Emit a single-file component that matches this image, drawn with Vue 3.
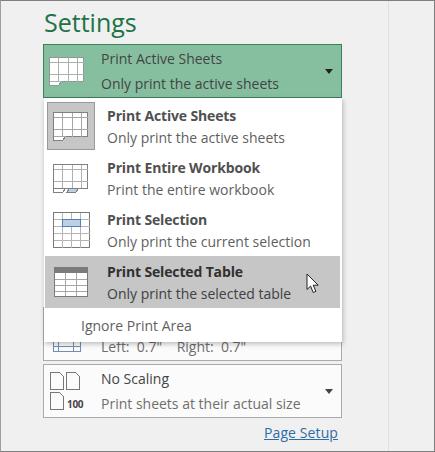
<script setup>
const options = [
  { id: 'active', title: 'Print Active Sheets', desc: 'Only print the active sheets' },
  { id: 'workbook', title: 'Print Entire Workbook', desc: 'Print the entire workbook' },
  { id: 'selection', title: 'Print Selection', desc: 'Only print the current selection' },
  { id: 'table', title: 'Print Selected Table', desc: 'Only print the selected table' }
]
</script>

<template>
  <div class="window">
    <div class="panel">
      <h1 class="heading">Settings</h1>

      <div class="rows">
        <div class="row row-open">
          <div class="row-icon">
            <svg width="36" height="29" viewBox="0 0 36 29" class="crisp">
              <path d="M.5.5h34v24h-22l-3 4h-9z" fill="#fff" stroke="#8e9a92" />
              <path d="M.5 5.500h34M.5 17.500h34M9.500 1v24M19.500 1v24M28.500 1v24M.5 24.500h12" fill="none" stroke="#a9b2ac" />
            </svg>
          </div>
          <div class="row-text">
            <div class="row-title">Print Active Sheets</div>
            <div class="row-desc">Only print the active sheets</div>
          </div>
          <span class="caret"></span>
        </div>

        <div class="row row-margins">
          <div class="row-icon">
            <svg width="28" height="44" viewBox="0 0 28 44" class="crisp">
              <path d="M.5 1h27v42h-27zM.5 38.500h27M5.500 1v42M20.500 1v42" fill="none" stroke="#6f8db5" />
            </svg>
          </div>
          <div class="row-text">
            <div class="row-title">&nbsp;</div>
            <div class="row-desc muted">Left:&nbsp; 0.7"&nbsp;&nbsp;&nbsp; Right:&nbsp; 0.7"</div>
          </div>
        </div>

        <div class="row row-scaling">
          <div class="row-icon scale-icon">
            <svg width="32" height="38" viewBox="0 0 32 38" class="crisp">
              <path d="M.5.500h9l4 4v13h-13zM16.500.500h9l4 4v13h-13zM.5 20.500h9l4 4v13h-13z" fill="none" stroke="#777" />
            </svg>
            <span class="scale-num">100</span>
          </div>
          <div class="row-text">
            <div class="row-title">No Scaling</div>
            <div class="row-desc muted">Print sheets at their actual size</div>
          </div>
          <span class="caret caret-light"></span>
        </div>
      </div>

      <div class="link-line">
        <a class="setup-link">Page Setup</a>
      </div>

      <!-- dropdown lies over the rows -->
      <div class="menu">
        <div
          v-for="opt in options"
          :key="opt.id"
          class="menu-item"
          :class="{ hovered: opt.id === 'table' }"
        >
          <div class="thumb" :class="{ 'thumb-active': opt.id === 'active' }">
            <svg v-if="opt.id === 'active'" width="36" height="29" viewBox="0 0 36 29" class="crisp">
              <path d="M.5.500h34v24h-22l-3 4h-9z" fill="#fff" stroke="#808080" />
              <path d="M.5 5.500h34M.5 17.500h34M9.500 1v24M19.500 1v24M28.500 1v24M.5 24.500h12" fill="none" stroke="#a6a6a6" />
            </svg>
            <svg v-else-if="opt.id === 'workbook'" width="36" height="29" viewBox="0 0 36 29" class="crisp">
              <path d="M.5.500h34v24h-22l-3 4h-9z" fill="#fff" stroke="#808080" />
              <path d="M.5 5.500h34M.5 17.500h34M9.500 1v24M19.500 1v24M28.500 1v24" fill="none" stroke="#b0b0b0" />
              <path d="M.5 24.500h34" stroke="#808080" />
              <path d="M13.500 28.500l3-4h9l-3 4z" fill="#bdd0e6" stroke="#808080" />
            </svg>
            <svg v-else-if="opt.id === 'selection'" width="37" height="36" viewBox="0 0 37 36" class="crisp">
              <rect x=".5" y=".5" width="36" height="35" fill="#fff" stroke="#7a7a7a" />
              <path d="M.5 7.500h36M.5 14.500h36M.5 21.500h36M.5 28.500h36M9.500 1v35M18.500 1v35M27.500 1v35" fill="none" stroke="#b5b5b5" />
              <rect x="9.500" y="7.500" width="18" height="7" fill="#bdd0e6" stroke="#4f81bd" />
            </svg>
            <svg v-else width="34" height="30" viewBox="0 0 34 30" class="crisp">
              <rect x=".5" y=".5" width="33" height="29" fill="#fff" stroke="#7a7a7a" />
              <rect x="0" y="0" width="34" height="6" fill="#7a7a7a" />
              <path d="M1 12.500h32M1 18.500h32M1 24.500h32M11.500 6v23M22.500 6v23" fill="none" stroke="#a6a6a6" />
            </svg>
          </div>
          <div class="item-text">
            <div class="item-title">{{ opt.title }}</div>
            <div class="item-desc">{{ opt.desc }}</div>
          </div>
        </div>
        <div class="menu-footer">Ignore Print Area</div>
      </div>

      <!-- mouse pointer -->
      <svg class="pointer" width="14" height="21" viewBox="0 0 14 21">
        <path d="M1 1v15.500l3.600-3.400 2.600 6.400 2.700-1.100-2.700-6.200h5z" fill="#fff" stroke="#222" stroke-linejoin="round" />
      </svg>
    </div>
  </div>
</template>

<style>
html,
body {
  margin: 0;
  background: #f0f0f0;
}
</style>

<style scoped>
.window {
  width: 435px;
  height: 452px;
  box-sizing: border-box;
  border: 1px solid #7f7f7f;
  border-left-color: #a0a0a0;
  background: #f0f0f0;
  font-family: "Open Sans", "Noto Sans", sans-serif;
  overflow: hidden;
}

.panel {
  position: relative;
  width: 388px;
  height: 100%;
  box-sizing: border-box;
  padding: 0 46px 0 42px;
  border-right: 1px solid #e0e0e0;
}

.heading {
  margin: 0;
  height: 43px;
  padding-left: 1px;
  font-size: 25px;
  line-height: 42px;
  font-weight: 400;
  color: #217346;
}

.rows {
  display: flex;
  flex-direction: column;
  gap: 3px;
}

.row {
  display: flex;
  align-items: center;
  box-sizing: border-box;
  height: 54px;
  border: 1px solid #ababab;
  background: #fbfbfb;
}

.row-open {
  background: #86bf9f;
  border-color: #3e8158;
  margin-bottom: 206px;
}

.row-icon {
  flex: none;
  width: 57px;
  padding-left: 5px;
  box-sizing: border-box;
  display: flex;
}

.row-margins .row-icon {
  padding-left: 9px;
  margin-top: -8px;
}

.row-scaling .row-icon {
  padding-left: 6px;
}

.row-text {
  flex: 1;
  line-height: 25px;
  font-size: 14px;
  color: #444;
  white-space: nowrap;
}

.row-desc.muted {
  color: #6e6e6e;
}

.row-scaling .row-text {
  margin-top: -1px;
}

.caret {
  flex: none;
  width: 0;
  height: 0;
  margin: 0 8px 0 0;
  border-left: 4.5px solid transparent;
  border-right: 4.5px solid transparent;
  border-top: 5px solid #222;
}

.caret-light {
  border-top-color: #444;
}

.crisp {
  shape-rendering: crispEdges;
  display: block;
}

.scale-icon {
  position: relative;
}

.scale-num {
  position: absolute;
  left: 23px;
  top: 26px;
  font-size: 10px;
  line-height: 12px;
  font-weight: 700;
  letter-spacing: -0.3px;
  color: #444;
}

.link-line {
  display: flex;
  justify-content: flex-end;
  padding: 5px 4px 0 0;
}

.setup-link {
  font-size: 14px;
  letter-spacing: 0.1px;
  line-height: 19px;
  color: #2f6ca6;
  text-decoration: underline;
}

.menu {
  position: absolute;
  left: 43px;
  top: 97px;
  width: 298px;
  height: 244px;
  box-sizing: border-box;
  padding: 2px 2px 0 1px;
  background: #fff;
  box-shadow: 1px 2px 5px rgba(0, 0, 0, 0.25);
}

.menu-item {
  display: flex;
  align-items: center;
  height: 52px;
}

.menu-item.hovered {
  background: #c6c6c6;
}

.thumb {
  flex: none;
  width: 48px;
  height: 48px;
  margin: 0 12px 0 2px;
  box-sizing: border-box;
  display: flex;
  align-items: center;
  justify-content: center;
}

.thumb-active {
  background: #c6c6c6;
  border: 1px solid #999;
}

.item-text {
  flex: 1;
  margin-top: 2px;
  font-size: 14px;
  line-height: 22px;
  white-space: nowrap;
  color: #5f5f5f;
}

.item-title {
  font-weight: 700;
  color: #505050;
  letter-spacing: -0.15px;
}

.hovered .item-title {
  color: #303030;
}

.hovered .item-desc {
  color: #404040;
}

.menu-footer {
  height: 33px;
  margin-top: 1px;
  padding-left: 36px;
  font-size: 14px;
  line-height: 33px;
  color: #5f5f5f;
}

.pointer {
  position: absolute;
  left: 305px;
  top: 272px;
}
</style>
